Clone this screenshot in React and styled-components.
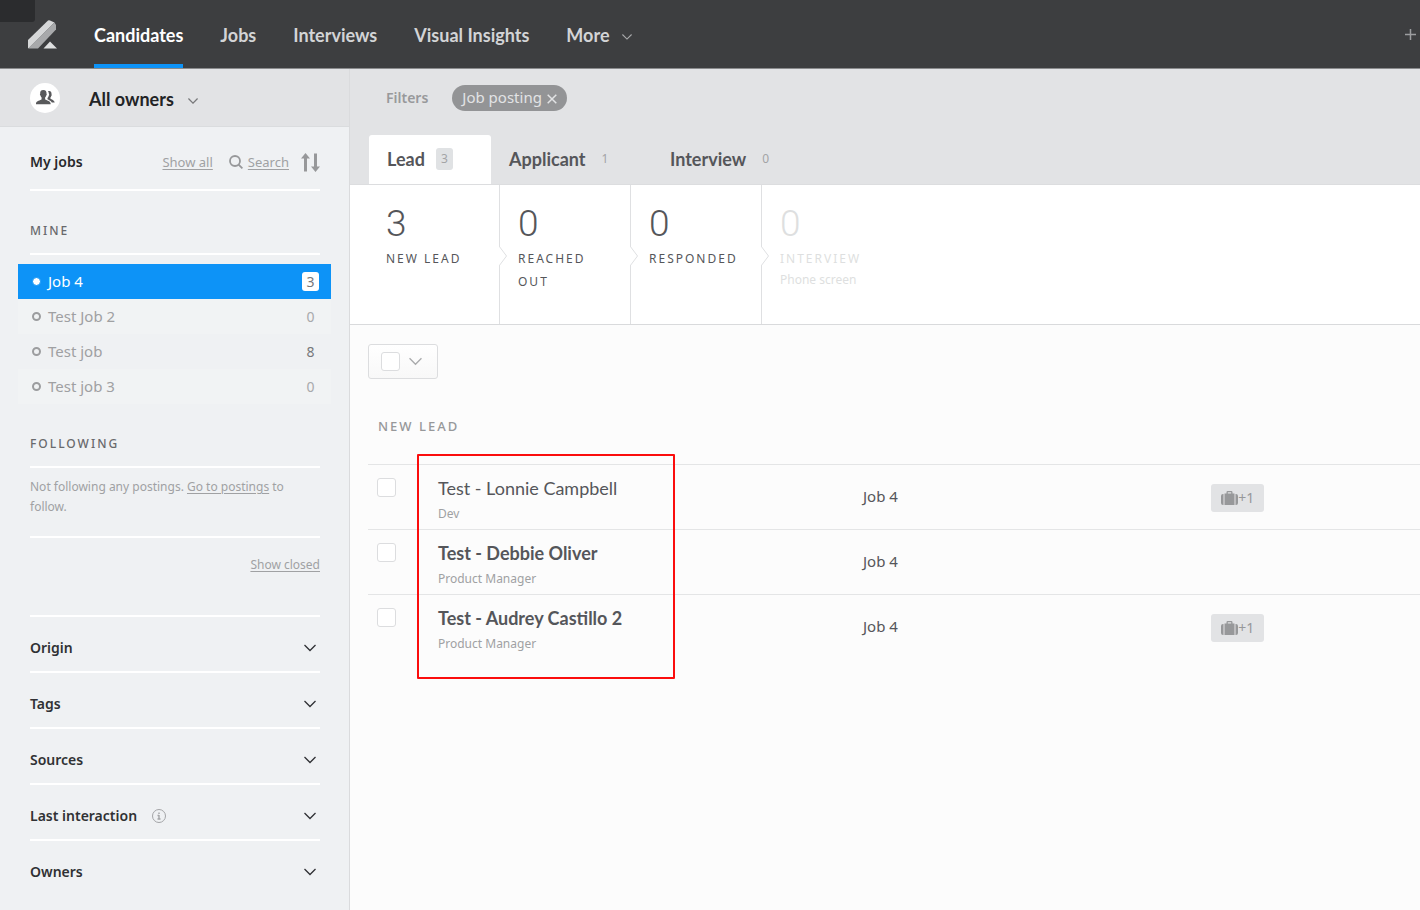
import React from 'react'
import styled, { createGlobalStyle } from 'styled-components'

const GlobalStyle = createGlobalStyle`
  *, *::before, *::after {
    box-sizing: border-box;
  }
  body {
    margin: 0;
    background: #fcfcfc;
    color: #55565a;
    font-family: 'Noto Sans', 'Open Sans', sans-serif;
    font-size: 14px;
    line-height: 20px;
  }
  button {
    padding: 0;
    border: 0;
    background: none;
    color: inherit;
    font: inherit;
    cursor: pointer;
  }
  h2, h3, p, ul {
    margin: 0;
    padding: 0;
    list-style: none;
  }
  svg {
    display: block;
    flex: none;
  }
`

const Page = styled.div`
  display: flex;
  flex-direction: column;
  min-height: 100vh;
`

const Header = styled.header`
  position: relative;
  display: flex;
  align-items: stretch;
  height: 69px;
  padding: 0 4px 0 28px;
  background: #3d3e40;
  border-bottom: 1px solid #8a8b8d;
  overflow: hidden;
`

const HeaderCorner = styled.div`
  position: absolute;
  top: 0;
  left: 0;
  width: 35px;
  height: 22px;
  border-radius: 0 0 3px 0;
  background: #2b2c2e;
`

const LogoLink = styled.a`
  position: relative;
  align-self: center;
  margin-right: 37px;
`

const Nav = styled.nav`
  display: flex;
  gap: 37px;
`

const NavLink = styled.a`
  display: flex;
  align-items: center;
  gap: 12px;
  padding-top: 6px;
  border-bottom: 4px solid ${props => props.$active ? '#0d93f7' : 'transparent'};
  color: ${props => props.$active ? '#fff' : '#d3d4d6'};
  font: bold 18px/24px Lato, sans-serif;
  text-decoration: none;

  & > svg {
    margin-top: 4px;
    color: #a9aaac;
  }
`

const AddButton = styled.button`
  margin-left: auto;
  color: #9c9d9f;
`

const Columns = styled.div`
  display: flex;
  flex: 1;
`

const Sidebar = styled.aside`
  flex: none;
  width: 350px;
  border-right: 1px solid #dadbdd;
  background: #eff1f3;
`

const OwnerBar = styled.div`
  display: flex;
  align-items: center;
  gap: 29px;
  height: 58px;
  padding: 0 30px;
  border-bottom: 1px solid #dadcde;
  background: #e2e3e5;
`

const Avatar = styled.span`
  display: flex;
  align-items: center;
  justify-content: center;
  width: 30px;
  height: 30px;
  border-radius: 50%;
  background: #fff;
  color: #58595b;
`

const OwnerButton = styled.button`
  display: flex;
  align-items: center;
  gap: 14px;
  padding-top: 2px;
  color: #222326;
  font: bold 18px/24px Lato, sans-serif;

  & > svg {
    margin-top: 4px;
    color: #77787a;
  }
`

const SidebarSection = styled.section`
  margin: 0 29px 0 30px;
`

const JobsHeader = styled.div`
  display: flex;
  align-items: center;
  height: 64px;
  padding-top: 8px;
  border-bottom: 2px solid #fff;
`

const SidebarTitle = styled.h2`
  color: #28292c;
  font-size: 14px;
  font-weight: 600;
  line-height: 20px;
`

const MutedLink = styled.a`
  color: #a0a1a3;
  font-size: ${props => props.$large ? '13px' : '12px'};
  text-underline-offset: 2px;
`

const JobTools = styled.div`
  display: flex;
  align-items: center;
  gap: 12px;
  margin-left: auto;
  color: #97989a;
`

const SearchTool = styled.span`
  display: flex;
  align-items: center;
  gap: 5px;
  margin-left: 4px;
`

const GroupTitle = styled.h3`
  padding: 30px 0 12px;
  border-bottom: 2px solid #fff;
  color: #68696c;
  font-size: 12px;
  font-weight: 500;
  line-height: 20px;
  letter-spacing: 2px;
`

const JobList = styled.ul`
  margin: 9px 18px 0;
`

const JobItem = styled.li`
  background: ${props => props.$shaded ? '#f1f3f4' : 'transparent'};
`

const JobButton = styled.button`
  display: flex;
  align-items: center;
  width: 100%;
  height: 35px;
  padding: 0 12px 0 14px;
  background: ${props => props.$active ? '#0d93f7' : 'transparent'};
  color: ${props => props.$active ? '#fff' : '#9fa0a2'};
  font-size: 15px;
`

const JobName = styled.span`
  padding-bottom: 2px;
`

const Dot = styled.span`
  width: 9px;
  height: 9px;
  margin-right: 7px;
  border: ${props => props.$active ? '1px solid #0d93f7' : '2px solid #9c9d9f'};
  border-radius: 50%;
  background: ${props => props.$active ? '#fff' : 'transparent'};
`

const JobCount = styled.span`
  width: 17px;
  margin-left: auto;
  border-radius: 3px;
  background: ${props => props.$active ? '#fff' : 'transparent'};
  color: ${props => props.$strong ? '#77787a' : '#a8a9ab'};
  font-size: 14px;
  line-height: 19px;
  text-align: center;
`

const FollowText = styled.p`
  padding: 9px 0 19px;
  border-bottom: 2px solid #fff;
  color: #a0a1a3;
  font-size: 12px;
  line-height: 20px;
`

const ClosedRow = styled.div`
  padding: 16px 0 40px;
  border-bottom: 2px solid #fff;
  text-align: right;
`

const FacetButton = styled.button`
  display: flex;
  align-items: center;
  gap: 15px;
  width: 100%;
  height: 56px;
  padding: 8px 4px 0 0;
  border-bottom: 2px solid ${props => props.$last ? 'transparent' : '#fff'};
  color: #303134;
  font-size: 14px;
  font-weight: 600;

  & > svg:last-child {
    margin-left: auto;
  }
`

const Main = styled.main`
  flex: 1;
  min-width: 0;
`

const Toolbar = styled.div`
  padding: 16px 19px 0;
  background: #e2e3e5;
  border-bottom: 1px solid #dcdddf;
`

const FilterRow = styled.div`
  display: flex;
  align-items: center;
  gap: 24px;
  padding-left: 17px;
`

const FilterLabel = styled.span`
  color: #98999b;
  font-weight: 600;
`

const FilterPill = styled.button`
  display: flex;
  align-items: center;
  gap: 5px;
  height: 26px;
  padding: 0 10px 2px 10px;
  border-radius: 13px;
  background: #939496;
  color: #e2e3e5;
  font-size: 15px;

  & > svg {
    margin-top: 4px;
  }
`

const Tabs = styled.div`
  display: flex;
  margin-top: 24px;
`

const Tab = styled.button`
  display: flex;
  align-items: center;
  gap: 11px;
  width: ${props => props.$width};
  height: 49px;
  padding: 0 0 2px 18px;
  border-radius: 3px 3px 0 0;
  background: ${props => props.$active ? '#fff' : 'transparent'};
  color: #55565a;
  font: bold 18px/24px Lato, sans-serif;
`

const TabCount = styled.span`
  min-width: 17px;
  padding: 1px 4px;
  border-radius: 3px;
  background: ${props => props.$active ? '#e0e2e4' : 'transparent'};
  color: #a3a4a6;
  font: 12px/20px 'Noto Sans', sans-serif;
`

const Stages = styled.div`
  display: flex;
  height: 140px;
  background: #fff;
  border-bottom: 1px solid #d9dadc;
`

const Stage = styled.button`
  position: relative;
  display: flex;
  flex-direction: column;
  align-items: flex-start;
  width: ${props => props.$first ? '150px' : '131px'};
  padding: 16px 16px 0 ${props => props.$first ? '36px' : '18px'};
  border-right: ${props => props.$last ? '0' : '1px solid #dfe0e2'};
  color: ${props => props.$last ? '#dedfe0' : '#55565a'};
  text-align: left;
`

const StageNumber = styled.span`
  font: 300 37px/46px Roboto, sans-serif;
`

const StageName = styled.span`
  font-size: 12px;
  line-height: 23px;
  letter-spacing: 2px;
`

const StageNote = styled.span`
  font-size: 12px;
  white-space: nowrap;
`

const StageArrow = styled.svg`
  position: absolute;
  top: 60px;
  right: -9px;
  z-index: 1;
`

const ListArea = styled.section`
  padding: 19px 0 0 18px;
`

const BulkSelect = styled.div`
  display: inline-flex;
  align-items: center;
  gap: 9px;
  height: 35px;
  padding: 0 15px 0 12px;
  border: 1px solid #dcdddf;
  border-radius: 3px;
  background: linear-gradient(#fff, #f8f8f8);
  color: #a9aaac;
  vertical-align: top;
`

const Checkbox = styled.input.attrs({ type: 'checkbox' })`
  display: block;
  appearance: none;
  width: 19px;
  height: 19px;
  margin: 0;
  border: 1px solid #dcdddf;
  border-radius: 3px;
  background: #fff;
`

const ListTitle = styled.h2`
  padding: 37px 0 27px 10px;
  color: #97989a;
  font-size: 13px;
  font-weight: 500;
  line-height: 21px;
  letter-spacing: 2px;
`

const TableWrap = styled.div`
  position: relative;
`

const Highlight = styled.div`
  position: absolute;
  top: -10px;
  left: 49px;
  width: 258px;
  height: 225px;
  border: 2px solid #fb0d0d;
  border-radius: 1px;
  pointer-events: none;
`

const Table = styled.table`
  width: 100%;
  table-layout: fixed;
  border-collapse: collapse;
`

const Cell = styled.td`
  width: ${props => props.$width};
  height: 65px;
  padding: ${props => props.$pad};
  border-top: 1px solid #e4e5e6;
  vertical-align: top;
`

const CandidateLink = styled.a`
  display: block;
  color: #55565a;
  font: ${props => props.$unread ? 'bold' : 'normal'} 18px/24px Lato, sans-serif;
  text-decoration: none;
`

const CandidateRole = styled.span`
  display: block;
  margin-top: 4px;
  color: #a0a1a3;
  font-size: 12px;
`

const JobLabel = styled.span`
  font-size: 15px;
`

const Badge = styled.span`
  display: inline-flex;
  align-items: center;
  height: 28px;
  padding: 0 10px;
  border-radius: 3px;
  background: #e2e3e5;
  color: #97989a;
  vertical-align: top;
`

const Chevron = ({ size = 12, width = 1.3 }) => (
  <svg width={size} height={size} viewBox="0 0 12 12" fill="none" stroke="currentColor" strokeWidth={width}>
    <path d="M.5 3 6 8.500l5.500-5.500" />
  </svg>
)

const Logo = () => (
  <svg width="29" height="29" viewBox="0 0 29 29">
    <path d="M0 20 20 .4Q21 0 22 .4L26.500 2.500 1 28H0z" fill="#d6d7d8" />
    <path d="M26.500 2.500 28 5v4.500L10 28.500H0z" fill="#a8a9ab" />
    <path d="M22 21.500 29 28.500H15.500z" fill="#dedfe0" />
  </svg>
)

const PeopleIcon = () => (
  <svg width="19" height="15" viewBox="0 0 19 15" fill="currentColor">
    <path d="M7.300 0C4.800 0 4 1.600 4.200 3.800c-.5.300-.3 1.400.3 1.800.2 1 .6 1.600 1.100 2v1.600C4.500 10.500.3 10.600 0 13.300v1h14.600v-1c-.3-2.700-4.300-2.800-5.500-4.100V7.600c.5-.4.900-1 1.100-2 .6-.4.800-1.500.3-1.800C10.700 1.600 9.800 0 7.300 0z" />
    <path d="M12 1.200c2.500-.8 3.800.8 3.500 3 .4.500.2 1.400-.3 1.700-.1.700-.4 1.200-.8 1.600v1c1 1.100 4 1.500 4.300 4h-2.900c-.9-2-3.200-2.600-4.300-3.300V8c.7-.7 1-1.600 1.100-2.100.7-.8.7-1.800.2-2.500 0-.8-.3-1.600-.8-2.200z" />
  </svg>
)

const SearchIcon = () => (
  <svg width="14" height="14" viewBox="0 0 14 14" fill="none" stroke="currentColor" strokeWidth="1.800">
    <circle cx="6" cy="6" r="5" />
    <path d="m9.600 9.600 3.800 3.800" />
  </svg>
)

const SortIcon = () => (
  <svg width="19" height="19" viewBox="0 0 19 19" fill="currentColor">
    <path d="M4.500 0 9 5.500H6V18.500H3V5.500H0z" />
    <path d="M14.500 19 10 13.500h3V.5h3v13h3z" />
  </svg>
)

const InfoIcon = () => (
  <svg width="14" height="14" viewBox="0 0 14 14" fill="none" stroke="#a3a4a6">
    <circle cx="7" cy="7" r="6.500" />
    <path d="M7 3.500v1.500M7 6v4M5.500 6.500H7M5.500 10h3" strokeWidth="1.400" />
  </svg>
)

const CloseIcon = () => (
  <svg width="10" height="10" viewBox="0 0 10 10" fill="none" stroke="currentColor" strokeWidth="1.500">
    <path d="m.7.7 8.600 8.600M9.300.7.7 9.300" />
  </svg>
)

const PlusIcon = () => (
  <svg width="11" height="11" viewBox="0 0 11 11" stroke="currentColor" strokeWidth="1.500">
    <path d="M5.500 0v11M0 5.500h11" />
  </svg>
)

const CaseIcon = () => (
  <svg width="17" height="15" viewBox="0 0 17 15" fill="currentColor">
    <path d="M3.500 2.500h2V1.200Q5.500 0 6.700 0h3.600q1.200 0 1.200 1.200v1.300h2V14h-10zM6.800 2.500h3.400V1.300H6.800z" fillRule="evenodd" />
    <path d="M2.500 3v11H2q-2 0-2-2V5q0-2 2-2zM14.500 3v11h.5q2 0 2-2V5q0-2-2-2z" />
  </svg>
)

const jobs = [
  { name: 'Job 4', count: 3, active: true },
  { name: 'Test Job 2', count: 0 },
  { name: 'Test job', count: 8 },
  { name: 'Test job 3', count: 0 },
]

const facets = ['Origin', 'Tags', 'Sources', 'Last interaction', 'Owners']

const tabs = [
  { name: 'Lead', count: 3, width: '122px' },
  { name: 'Applicant', count: 1, width: '161px' },
  { name: 'Interview', count: 0, width: '150px' },
]

const stages = [
  { name: 'NEW LEAD', count: 3 },
  { name: 'REACHED OUT', count: 0 },
  { name: 'RESPONDED', count: 0 },
  { name: 'INTERVIEW', count: 0, note: 'Phone screen' },
]

const candidates = [
  { name: 'Test - Lonnie Campbell', role: 'Dev', job: 'Job 4', others: 1 },
  { name: 'Test - Debbie Oliver', role: 'Product Manager', job: 'Job 4', unread: true },
  { name: 'Test - Audrey Castillo 2', role: 'Product Manager', job: 'Job 4', others: 1, unread: true },
]

const TopNav = () => (
  <Header>
    <HeaderCorner />
    <LogoLink href="#" aria-label="Home"><Logo /></LogoLink>
    <Nav>
      <NavLink href="#" $active>Candidates</NavLink>
      <NavLink href="#">Jobs</NavLink>
      <NavLink href="#">Interviews</NavLink>
      <NavLink href="#">Visual Insights</NavLink>
      <NavLink href="#">More <Chevron size={10} /></NavLink>
    </Nav>
    <AddButton aria-label="Add"><PlusIcon /></AddButton>
  </Header>
)

const JobsSidebar = () => (
  <Sidebar>
    <OwnerBar>
      <Avatar><PeopleIcon /></Avatar>
      <OwnerButton>All owners <Chevron size={10} width={1.5} /></OwnerButton>
    </OwnerBar>
    <SidebarSection>
      <JobsHeader>
        <SidebarTitle>My jobs</SidebarTitle>
        <JobTools>
          <MutedLink href="#" $large>Show all</MutedLink>
          <SearchTool><SearchIcon /><MutedLink href="#" $large>Search</MutedLink></SearchTool>
          <button aria-label="Sort jobs"><SortIcon /></button>
        </JobTools>
      </JobsHeader>
      <GroupTitle>MINE</GroupTitle>
    </SidebarSection>
    <JobList>
      {jobs.map((job, i) => (
        <JobItem key={job.name} $shaded={i % 2 === 1}>
          <JobButton $active={job.active}>
            <Dot $active={job.active} />
            <JobName>{job.name}</JobName>
            <JobCount $active={job.active} $strong={job.count > 0}>{job.count}</JobCount>
          </JobButton>
        </JobItem>
      ))}
    </JobList>
    <SidebarSection>
      <GroupTitle>FOLLOWING</GroupTitle>
      <FollowText>
        Not following any postings. <MutedLink href="#">Go to postings</MutedLink> to<br />follow.
      </FollowText>
      <ClosedRow><MutedLink href="#">Show closed</MutedLink></ClosedRow>
      {facets.map((facet, i) => (
        <FacetButton key={facet} $last={i === facets.length - 1}>
          {facet}
          {facet === 'Last interaction' && <InfoIcon />}
          <Chevron />
        </FacetButton>
      ))}
    </SidebarSection>
  </Sidebar>
)

const CandidateTable = () => (
  <TableWrap>
    <Table>
      <tbody>
        {candidates.map(({ name, role, job, others, unread }) => (
          <tr key={name}>
            <Cell $width="70px" $pad="13px 0 0 9px"><Checkbox aria-label={`Select ${name}`} /></Cell>
            <Cell $width="40.4%" $pad="11px 0 0">
              <CandidateLink href="#" $unread={unread}>{name}</CandidateLink>
              <CandidateRole>{role}</CandidateRole>
            </Cell>
            <Cell $width="33.1%" $pad="21px 0 0"><JobLabel>{job}</JobLabel></Cell>
            <Cell $pad="19px 0 0">{others && <Badge><CaseIcon />+{others}</Badge>}</Cell>
          </tr>
        ))}
      </tbody>
    </Table>
    <Highlight />
  </TableWrap>
)

const App = () => (
  <>
    <GlobalStyle />
    <Page>
      <TopNav />
      <Columns>
        <JobsSidebar />
        <Main>
          <Toolbar>
            <FilterRow>
              <FilterLabel>Filters</FilterLabel>
              <FilterPill>Job posting <CloseIcon /></FilterPill>
            </FilterRow>
            <Tabs>
              {tabs.map((tab, i) => (
                <Tab key={tab.name} $active={i === 0} $width={tab.width}>
                  {tab.name} <TabCount $active={i === 0}>{tab.count}</TabCount>
                </Tab>
              ))}
            </Tabs>
          </Toolbar>
          <Stages>
            {stages.map((stage, i) => (
              <Stage key={stage.name} $first={i === 0} $last={i === stages.length - 1}>
                <StageNumber>{stage.count}</StageNumber>
                <StageName>{stage.name}</StageName>
                {stage.note && <StageNote>{stage.note}</StageNote>}
                {i < stages.length - 1 && (
                  <StageArrow width="9" height="22" viewBox="0 0 9 22">
                    <path d="M0 1 7.500 11 0 21" fill="#fff" stroke="#dfe0e2" />
                  </StageArrow>
                )}
              </Stage>
            ))}
          </Stages>
          <ListArea>
            <BulkSelect>
              <Checkbox aria-label="Select all candidates" />
              <button aria-label="Selection options"><Chevron size={13} width={1.2} /></button>
            </BulkSelect>
            <ListTitle>NEW LEAD</ListTitle>
            <CandidateTable />
          </ListArea>
        </Main>
      </Columns>
    </Page>
  </>
)

export default App
